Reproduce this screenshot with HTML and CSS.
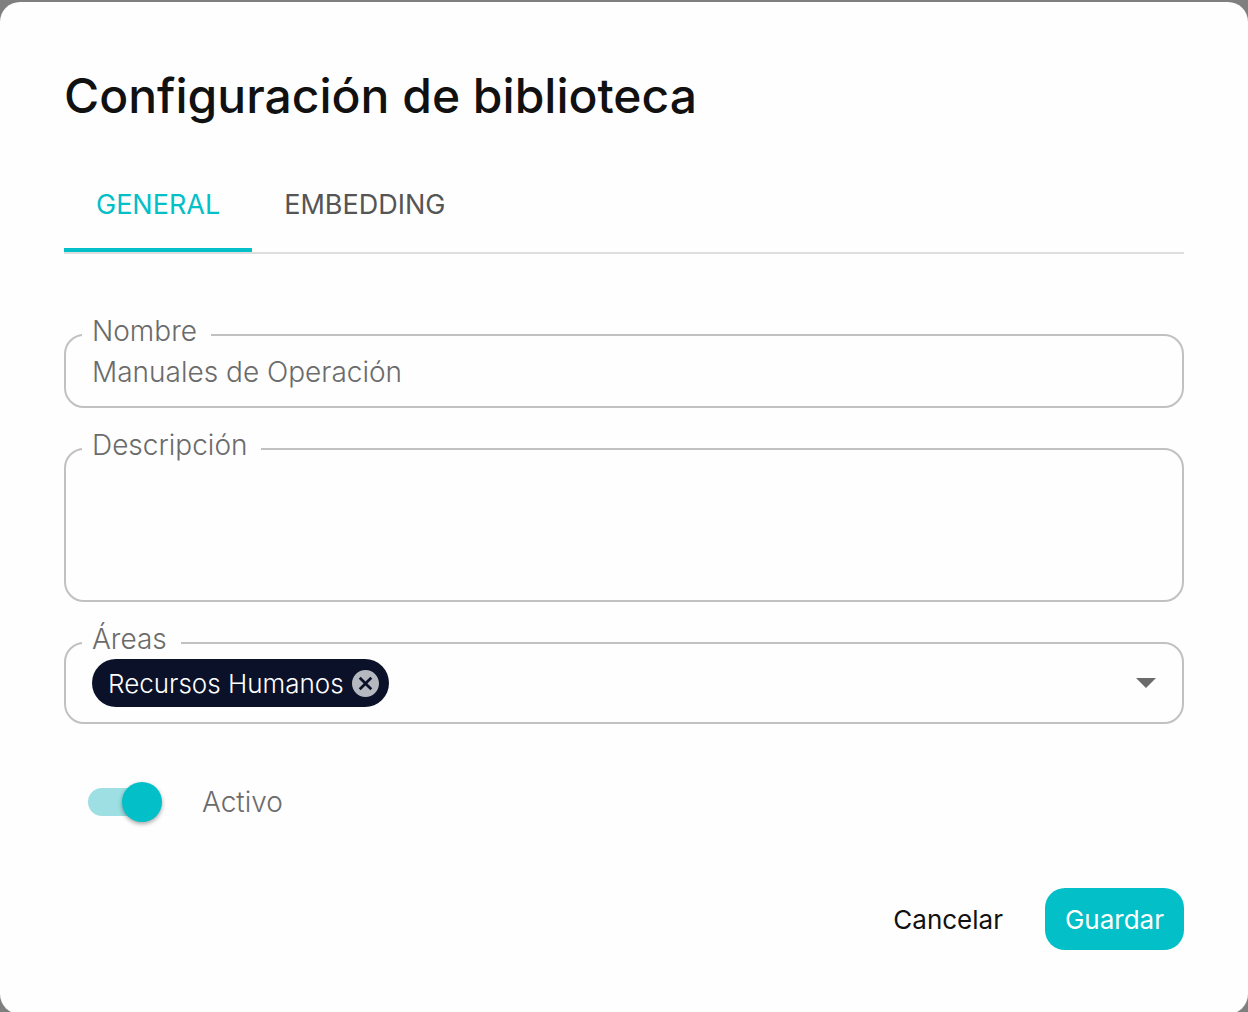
FILE: index.html
```
<!DOCTYPE html>
<html lang="es">
<head>
	<meta charset="utf-8">
	<meta name="viewport" content="width=device-width, initial-scale=1">
	<title>Configuración de biblioteca</title>
	<link rel="stylesheet" href="styles.css">
</head>
<body>
	<main class="dialog">
		<h1 class="title">Configuración de biblioteca</h1>
		<nav class="tabs">
			<button type="button" class="tab active">GENERAL</button>
			<button type="button" class="tab">EMBEDDING</button>
		</nav>
		<form class="form">
			<!-- campos -->
			<div class="fields">
				<fieldset class="field">
					<legend><label for="nombre">Nombre</label></legend>
					<input type="text" id="nombre" name="nombre" value="Manuales de Operación">
				</fieldset>
				<fieldset class="field">
					<legend><label for="descripcion">Descripción</label></legend>
					<textarea id="descripcion" name="descripcion"></textarea>
				</fieldset>
				<fieldset class="field">
					<legend><label for="areas">Áreas</label></legend>
					<div class="areas">
						<span class="chip">Recursos Humanos
							<button type="button" class="chip-delete" aria-label="Quitar">
								<svg viewBox="2 2 20 20"><path d="M12 2C6.47 2 2 6.47 2 12s4.47 10 10 10 10-4.47 10-10S17.53 2 12 2zm5 13.59L15.59 17 12 13.41 8.41 17 7 15.59 10.59 12 7 8.41 8.41 7 12 10.59 15.59 7 17 8.41 13.41 12 17 15.59z"/></svg>
							</button>
						</span>
						<select id="areas" name="areas">
							<option value=""></option>
						</select>
						<svg class="arrow" viewBox="0 0 20 10"><path d="M0 0h20L10 10z"/></svg>
					</div>
				</fieldset>
			</div>
			<div class="switch-row">
				<input type="checkbox" class="switch" id="activo" name="activo" checked>
				<label for="activo">Activo</label>
			</div>
			<!-- botones -->
			<div class="actions">
				<button type="button" class="btn">Cancelar</button>
				<button type="submit" class="btn primary">Guardar</button>
			</div>
		</form>
	</main>
</body>
</html>
```
FILE: styles.css
```
*{margin: 0;padding: 0;box-sizing: border-box;}
html{overflow: hidden;}
body{background-color: #7f7f7f;padding: 2px 0;font-family: "Inter", "Liberation Sans", sans-serif;font-size: 28px;font-weight: 300;color: #6b6b6b;}
button,input,textarea,select{font: inherit;color: inherit;border: 0;background: none;outline: none;}
button{cursor: pointer;}
.dialog{background-color: #fefefe;border-radius: 20px;padding: 62px 64px 64px;}
.title{font-size: 48px;font-weight: 500;line-height: 64px;color: #111;}
.tabs{display: flex;margin-top: 28px;border-bottom: 2px solid #dedede;}
.tab{height: 96px;padding: 4px 32px 0;font-size: 27px;font-weight: 400;color: #555;border-bottom: 4px solid transparent;}
.tab.active{color: #03bfc7;border-bottom-color: #03bfc7;}
.fields{display: flex;flex-direction: column;gap: 25px;padding-top: 65px;}
.field{min-width: 0;border: 2px solid #c1c1c1;border-radius: 20px;padding: 0 26px 15px;}
.field legend{margin-left: -10px;padding: 0 14px 8px 10px;line-height: 24px;}
.field input,.field textarea{display: block;width: 100%;height: 40px;padding-top: 2px;}
.field textarea{height: 120px;resize: none;}
.areas{display: flex;align-items: center;}
.areas select{flex: 1;min-width: 0;height: 48px;appearance: none;}
.arrow{width: 20px;height: 10px;fill: #6b6b6b;pointer-events: none;}
.chip{display: flex;align-items: center;gap: 8px;height: 48px;padding: 0 10px 0 16px;border-radius: 24px;background-color: #0a1128;color: #fff;font-size: 26px;}
.chip-delete{width: 27px;height: 27px;}
.chip-delete svg{display: block;fill: #b5b8bf;}
.switch-row{display: flex;align-items: center;gap: 46px;height: 40px;margin: 58px 0 66px 24px;}
.switch{position: relative;width: 68px;height: 28px;border-radius: 14px;appearance: none;background-color: #9ddfe2;}
.switch::before{content: "";position: absolute;top: -6px;left: 0;width: 40px;height: 40px;border-radius: 50%;background-color: #fff;box-shadow: 0 2px 4px rgba(0,0,0,.35);}
.switch:checked::before{left: 34px;background-color: #03bfc7;}
.actions{display: flex;justify-content: flex-end;gap: 22px;}
.btn{height: 62px;padding: 0 20px;border-radius: 20px;font-size: 26px;font-weight: 400;color: #111;}
.btn.primary{background-color: #03bfc7;color: #fff;}
```
